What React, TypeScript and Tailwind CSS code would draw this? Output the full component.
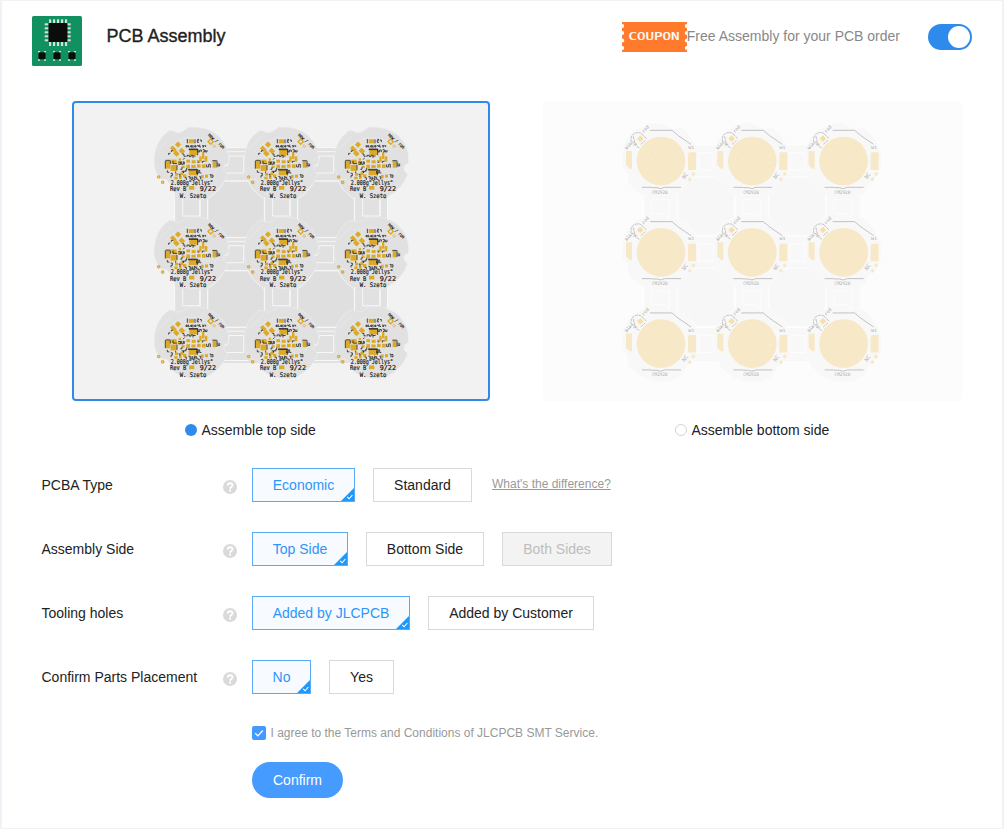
import React from "react";

const PITCH_TOP_X = 90;
const PITCH_TOP = 89.75;
const PITCH_BOTTOM = 91.3;
const CELLS = [0, 1, 2].flatMap((row) => [0, 1, 2].map((col) => ({ row, col })));
const GAPS = [0, 1].flatMap((a) => [0, 1, 2].map((b) => ({ a, b })));

// x, y, width, height of the exposed pads, in thirds of a pixel
const PADS: number[][] = [
  [131, 73, 16, 12], [133, 104, 24, 16], [131, 165, 25, 16], [62, 137, 14, 24], [79, 134, 16, 12],
  [77, 150, 18, 18], [98, 140, 10, 8], [203, 138, 11, 20], [171, 112, 7, 20], [163, 124, 7, 16],
  [179, 124, 8, 16], [124, 134, 11, 9], [140, 136, 12, 9], [124, 149, 11, 11], [139, 150, 13, 9],
  [156, 148, 11, 10], [171, 148, 11, 11], [101, 130, 7, 7], [90, 174, 9, 8], [106, 172, 9, 9],
  [88, 185, 10, 8], [102, 183, 8, 9], [114, 178, 10, 9], [168, 180, 8, 10], [180, 179, 9, 9],
  [132, 213, 16, 11], [110, 152, 9, 7], [156, 135, 9, 7],
];

// small black silkscreen strokes around the pads
const SILK =
  "M127 72v13 M150 73v12 M132 102h26v2h-26z M158 103v18 M130 163h27v2h-27z M157 164v17 M62 136h14 M61 137v24 M76 137v10 M202 137h13 M216 137v20 M84 138v8h12 M96 150v16 M157 73h4v3h-4v6h5 M165 75h4v6 M123 92h4v4h-4z M130 90v6h4 M137 92h4v4h-4z M144 90v9 M149 92h4v4h-4z M156 92h5v4 M164 89v7h4 M171 92h5v4h-4 M178 92h4v4 M159 104v7h5v-6h5v6 M173 104h5v7h-4 M181 105v6h5v-6 M126 126v-5h7v4h5v-4h6v8 M100 141h7v7h-7 M110 139v9h5v-9 M118 140v8 M111 157v6h-5 M185 148v8h6v-8h5v10 M219 144v9h5v-7 M67 166v6h6 M77 175h5v7h-4v6 M92 174v-5 M101 178h4v7 M116 174v-5h8 M119 188h5v7 M130 185h5v8 M138 185v8h5v-8 M147 185h4v4h-4v4h5 M155 185v8h5 M163 185h4v8 M155 168v7h5v-9h4v8h5 M194 179h4v9 M199 180h5v7h-4 M71 120v-5h5 M79 111v-4h5 M112 117h5v7h5 M119 129l-5 5 M144 123h8 M158 142h5 M172 144v-5h7 M120 166h5v-7 M110 169h5v5";

function TopBoard() {
  return (
    <g>
      <path
        d="M72 47Q83 46 96 53Q110 53 118 46L132 36Q190 34 220 62Q254 94 251 143L237 153V166L248 178Q240 200 225 217Q190 256 145 252Q107 249 79 226L75 207L65 194L49 193Q28 174 27 142Q28 77 72 47Z"
        fill="#e1e1e1" stroke="#ededed" strokeWidth="2"
      />
      <path d="M74 94L119 69L169 70L202 96M39 105L80 65M207 178L220 156" fill="none" stroke="#ebebeb" strokeWidth="2" />
      <g fill="#ddaa27">
        {PADS.map(([x, y, w, h], i) => <rect key={i} x={x} y={y} width={w} height={h} />)}
        <rect x="93" y="82" width="13" height="13" transform="rotate(45 99 88)" />
        <rect x="77" y="96" width="17" height="11" transform="rotate(45 85 101)" />
        <rect x="104" y="101" width="13" height="15" transform="rotate(-45 110 108)" />
        <rect x="87" y="109" width="15" height="13" transform="rotate(45 94 115)" />
      </g>
      <g fill="none" stroke="#ddaa27" strokeWidth="4">
        <path d="M189 80l8-8l8 8l-8 8z" />
        <path d="M203 93l4-4l5 5l-5 4z" strokeWidth="2" />
        <circle cx="41" cy="186" r="3.5" />
        <circle cx="53" cy="202" r="3.5" />
      </g>
      <path d={SILK} fill="none" stroke="#111" strokeWidth="2.5" opacity=".88" />
      <g className="font-['DejaVu_Sans_Mono',monospace]" fill="#111" stroke="#111" strokeWidth=".5">
        <text x="77" y="209" fontSize="20" textLength="127" lengthAdjust="spacingAndGlyphs">2.008g"Jellys"</text>
        <text x="75" y="228" fontSize="20" textLength="49" lengthAdjust="spacingAndGlyphs">Rev B</text>
        <text x="164" y="228" fontSize="20" textLength="49" lengthAdjust="spacingAndGlyphs">9/22</text>
        <text x="104" y="248" fontSize="19" textLength="80" lengthAdjust="spacingAndGlyphs">W. Szeto</text>
        <text x="188" y="61" fontSize="14" textLength="62" lengthAdjust="spacingAndGlyphs" transform="rotate(42 188 61)">new / run</text>
      </g>
    </g>
  );
}

function TopPanel() {
  return (
    <svg viewBox="74 103 414 296" className="h-full w-full" role="img" aria-label="Top side">
      <path d="M175 148H387V363H175Z" fill="#e1e1e1" />
      {[0, 1].flatMap((r) => [0, 1].map((c) => (
        <path
          key={`${r}${c}`}
          transform={`translate(${145 + c * PITCH_TOP_X} ${115 + r * PITCH_TOP}) scale(.3333)`}
          d="M238 198H310Q320 224 345 242L358 254V320Q322 340 306 368H238Q221 335 188 317V252Q221 232 238 198Z"
          fill="#dfdfdf" stroke="#f4f4f4" strokeWidth="3"
        />
      )))}
      {GAPS.map(({ a, b }) => (
        <g key={`${a}${b}`} fill="none" stroke="#f7f7f7" strokeWidth="3">
          <g transform={`translate(${145 + a * PITCH_TOP_X} ${115 + b * PITCH_TOP}) scale(.3333)`}>
            <path d="M238 98H305M238 110H300M253 123H296V174H235M235 198H311M253 123L248 150L235 154" />
          </g>
          <g transform={`translate(${145 + b * PITCH_TOP_X} ${115 + a * PITCH_TOP}) scale(.3333)`}>
            <path d="M89 246V316M113 252V303H164V255M188 253V317M166 254V304" />
          </g>
        </g>
      ))}
      {CELLS.map(({ row, col }) => (
        <g key={`${row}${col}`} transform={`translate(${145 + col * PITCH_TOP_X} ${115 + row * PITCH_TOP}) scale(.3333)`}>
          <TopBoard />
        </g>
      ))}
    </svg>
  );
}

function BottomBoard() {
  return (
    <g>
      <path d="M105 27Q140 18 155 36L178 42L194 36Q223 52 239 88L250 115V154L242 179L210 211L202 232Q171 255 132 253Q73 248 39 201V175L22 154V119Q31 56 77 38Z" fill="#f8f8f8" />
      <circle cx="138" cy="138" r="73" fill="#f7e8c8" />
      <g fill="#f7e8c8">
        <path d="M33 108H51V161H44L33 150Z" />
        <path d="M221 112H243V165H219V125Z" />
        <path d="M229 177l6-7l7 7l-7 7zM218 193l6-6l7 6l-7 7z" />
      </g>
      <g fill="#fffdf8"><circle cx="109" cy="133" r="1.5" /><circle cx="144" cy="87" r="1" /><circle cx="166" cy="149" r="1.5" /><circle cx="190" cy="143" r="1.5" /><circle cx="164" cy="113" r="1" /></g>
      <g fill="none" stroke="#c2c2c2" strokeWidth="3">
        <path d="M105 46H171L190 62M190 62L228 88M81 217H107L112 218H126L137 221L149 217H198" />
        <path d="M49 83Q45 61 59 55Q73 49 82 58M55 64L61 91L73 99M51 80L66 90M80 57L96 72M77 88L91 76M34 102L52 84M55 91L70 81" strokeDasharray="9 2" />
      </g>
      <path d="M66 71l10-10l10 10l-10 10z" fill="#f6dfac" />
      <path d="M60 80l7-7l6 7l-6 8z" fill="#fcf9ef" stroke="#efe3c7" />
      <g className="font-['DejaVu_Sans_Mono',monospace]" fill="#b0b0b0">
        <text x="111" y="236" fontSize="14" textLength="47" lengthAdjust="spacingAndGlyphs">CM2920</text>
        <text x="220" y="102" fontSize="12" textLength="18" lengthAdjust="spacingAndGlyphs">W1</text>
        <text x="209" y="193" fontSize="16" transform="rotate(-55 209 193)">NC</text>
        <text x="86" y="55" fontSize="14" transform="rotate(-48 86 55)">red</text>
        <text x="35" y="104" fontSize="13" transform="rotate(-48 35 104)">blk</text>
      </g>
    </g>
  );
}

function BottomPanel() {
  return (
    <svg viewBox="543 101 419 300" className="h-full w-full" role="img" aria-label="Bottom side">
      <path d="M644 145H861V361H644Z" fill="#f8f8f8" />
      {[0, 1].flatMap((r) => [0, 1].map((c) => (
        <path
          key={`${r}${c}`}
          transform={`translate(${615 + c * PITCH_BOTTOM} ${115 + r * PITCH_BOTTOM}) scale(.3333)`}
          d="M242 186H305Q318 210 358 238V307Q322 325 308 361H242Q229 332 188 307V239L211 207Z"
          fill="#f7f7f7" stroke="#fdfdfd" strokeWidth="3"
        />
      )))}
      {GAPS.map(({ a, b }) => (
        <g key={`${a}${b}`} fill="none" stroke="#fdfdfd" strokeWidth="3">
          <g transform={`translate(${615 + a * PITCH_BOTTOM} ${115 + b * PITCH_BOTTOM}) scale(.3333)`}>
            <path d="M241 90H306M251 113H295V165H251Z" />
          </g>
          <g transform={`translate(${615 + b * PITCH_BOTTOM} ${115 + a * PITCH_BOTTOM}) scale(.3333)`}>
            <path d="M87 240V306M109 254H163V312L151 296H109ZM187 240V308" />
          </g>
        </g>
      ))}
      {CELLS.map(({ row, col }) => (
        <g key={`${row}${col}`} transform={`translate(${615 + col * PITCH_BOTTOM} ${115 + row * PITCH_BOTTOM}) scale(.3333)`}>
          <BottomBoard />
        </g>
      ))}
    </svg>
  );
}

function ChipIcon() {
  return (
    <svg viewBox="0 0 50 50" className="size-[50px]" aria-hidden="true">
      <rect width="50" height="50" rx="1.5" fill="#129160" />
      <g fill="#d8dedb">
        {[17, 21, 25, 29, 33].map((x) => (
          <React.Fragment key={x}>
            <rect x={x} y="3.3" width="2.1" height="4" />
            <rect x={x} y="26" width="2.1" height="4" />
          </React.Fragment>
        ))}
        {[7.3, 11.3, 15.3, 19.3, 23.3].map((y) => (
          <React.Fragment key={y}>
            <rect x="12.7" y={y} width="4" height="2" />
            <rect x="34.7" y={y} width="4" height="2" />
          </React.Fragment>
        ))}
        {[6, 21, 36].flatMap((x) => [35, 43].map((y) => (
          <React.Fragment key={`${x}-${y}`}>
            <rect x={x} y={y} width="2.1" height="1.8" />
            <rect x={x + 5.9} y={y} width="2.1" height="1.8" />
          </React.Fragment>
        )))}
      </g>
      <g fill="#0c0c0c">
        <rect x="16.5" y="7" width="19" height="19" rx=".7" />
        {[6.5, 21.5, 36.5].map((x) => <rect key={x} x={x} y="36.3" width="7" height="7" />)}
      </g>
    </svg>
  );
}

function Coupon() {
  return (
    <svg viewBox="0 0 65 30" className="h-[30px] w-[65px]" role="img" aria-label="Coupon">
      <rect width="65" height="30" fill="#ff7a2b" />
      <g fill="#fff">
        {[4, 11, 18.5, 26].map((y) => (
          <React.Fragment key={y}>
            <circle cx=".2" cy={y} r="2" />
            <circle cx="64.8" cy={y} r="2" />
          </React.Fragment>
        ))}
      </g>
      <text x="6.5" y="18.2" fontSize="10" fill="#fff" stroke="#fff" strokeWidth=".2" textLength="51" lengthAdjust="spacingAndGlyphs" className="font-['DejaVu_Sans_Mono',monospace]">COUPON</text>
    </svg>
  );
}

function Help() {
  return (
    <svg viewBox="0 0 14 14" className="mt-1 size-3.5 shrink-0" aria-hidden="true">
      <circle cx="7" cy="7" r="7" fill="#dadada" />
      <path d="M4.6 5.5Q4.7 3.2 7.1 3.2Q9.5 3.2 9.5 5.2Q9.5 6.3 8.1 7.1Q7.1 7.6 7.1 8.8" fill="none" stroke="#fff" strokeWidth="1.9" />
      <rect x="6.1" y="9.6" width="2" height="1.8" fill="#fff" />
    </svg>
  );
}

type Kind = "on" | "off" | "disabled";
const STYLES: Record<Kind, string> = {
  on: "border-[#5aaafa] bg-[#f7faff] text-[#2e96f8]",
  off: "border-[#d9d9d9] bg-white text-[#222]",
  disabled: "border-[#d9d9d9] bg-[#f3f3f3] text-[#bdbdbd]",
};

function Choice({ label, kind = "off", width }: { label: string; kind?: Kind; width: string }) {
  return (
    <button disabled={kind === "disabled"} className={`relative h-[34px] shrink-0 border text-center leading-8 whitespace-nowrap ${width} ${STYLES[kind]}`}>
      {label}
      {kind === "on" && (
        <svg viewBox="0 0 13 13" className="absolute right-0 bottom-0 size-[13px]" aria-hidden="true">
          <path d="M13 0V13H0Z" fill="#1e98fb" />
          <path d="M6.2 8.8L8.1 10.8L11.4 7" fill="none" stroke="#fff" strokeWidth="1.1" />
        </svg>
      )}
    </button>
  );
}

function Row({ label, children }: { label: string; children: React.ReactNode }) {
  return (
    <div className="flex h-[34px] items-center">
      <div className="w-[181.5px]">{label}</div>
      <Help />
      <div className="ml-[15px] flex items-center gap-[18px]">{children}</div>
    </div>
  );
}

export default function App() {
  return (
    <div className="h-[829px] w-[1004px] overflow-hidden border-x-2 border-y border-x-[#f1f2f7] border-y-[#f3f3f6] bg-white font-['Liberation_Sans',Arial,sans-serif] text-sm text-[#222]">
      <header className="flex h-[100px] items-start pt-[15px] pr-[30px] pl-[30px]">
        <ChipIcon />
        <h1 className="mt-2 ml-[24.5px] text-lg leading-6 [-webkit-text-stroke:0.35px_#222]">PCB Assembly</h1>
        <div className="ml-auto flex items-center pt-[6px]">
          <Coupon />
          <span className="relative -top-px text-[#888]">Free Assembly for your PCB order</span>
          <span role="switch" aria-checked="true" className="ml-[28px] flex h-[26px] w-11 items-center justify-end rounded-full bg-[#2f8beb] pr-[2px]">
            <span className="size-[22px] rounded-full bg-white" />
          </span>
        </div>
      </header>
      <section className="flex gap-[53px] pl-[70px]">
        <div>
          <div className="h-[300px] w-[418px] overflow-hidden rounded border-2 border-[#318be6] bg-[#f2f2f2]"><TopPanel /></div>
          <label className="flex h-[58px] items-center pl-[113px]">
            <span className="mr-[4.5px] size-3 rounded-full bg-[#2f8beb]" />Assemble top side
          </label>
        </div>
        <div>
          <div className="h-[300px] w-[419px] overflow-hidden rounded bg-[#fcfcfc]"><BottomPanel /></div>
          <label className="flex h-[58px] items-center pl-[132px]">
            <span className="mr-[4.5px] size-3 rounded-full border border-[#d3d3d3]" />Assemble bottom side
          </label>
        </div>
      </section>
      <section className="mt-[9px] flex flex-col gap-[30px] pl-[39.5px]">
        <Row label="PCBA Type">
          <Choice label="Economic" kind="on" width="w-[103px]" />
          <Choice label="Standard" width="w-[99px]" />
          <a className="ml-[2px] mb-[3px] text-xs text-[#999] underline">What's the difference?</a>
        </Row>
        <Row label="Assembly Side">
          <Choice label="Top Side" kind="on" width="w-[96px]" />
          <Choice label="Bottom Side" width="w-[118px]" />
          <Choice label="Both Sides" kind="disabled" width="w-[110px]" />
        </Row>
        <Row label="Tooling holes">
          <Choice label="Added by JLCPCB" kind="on" width="w-[158px]" />
          <Choice label="Added by Customer" width="w-[166px]" />
        </Row>
        <Row label="Confirm Parts Placement">
          <Choice label="No" kind="on" width="w-[59px]" />
          <Choice label="Yes" width="w-[65px]" />
        </Row>
      </section>
      <div className="mt-[31px] flex flex-col items-start pl-[250px]">
        <label className="flex h-4 items-center text-xs text-[#999]">
          <svg viewBox="0 0 14 14" className="mr-[4.5px] size-3.5" aria-hidden="true">
            <rect width="14" height="14" rx="2" fill="#429aff" />
            <path d="M3.2 7.2L5.9 9.8L10.8 4.5" fill="none" stroke="#fff" strokeWidth="1.2" />
          </svg>
          I agree to the Terms and Conditions of JLCPCB SMT Service.
        </label>
        <button className="mt-[21px] h-9 w-[91px] rounded-full bg-[#459bff] text-white">Confirm</button>
      </div>
    </div>
  );
}
